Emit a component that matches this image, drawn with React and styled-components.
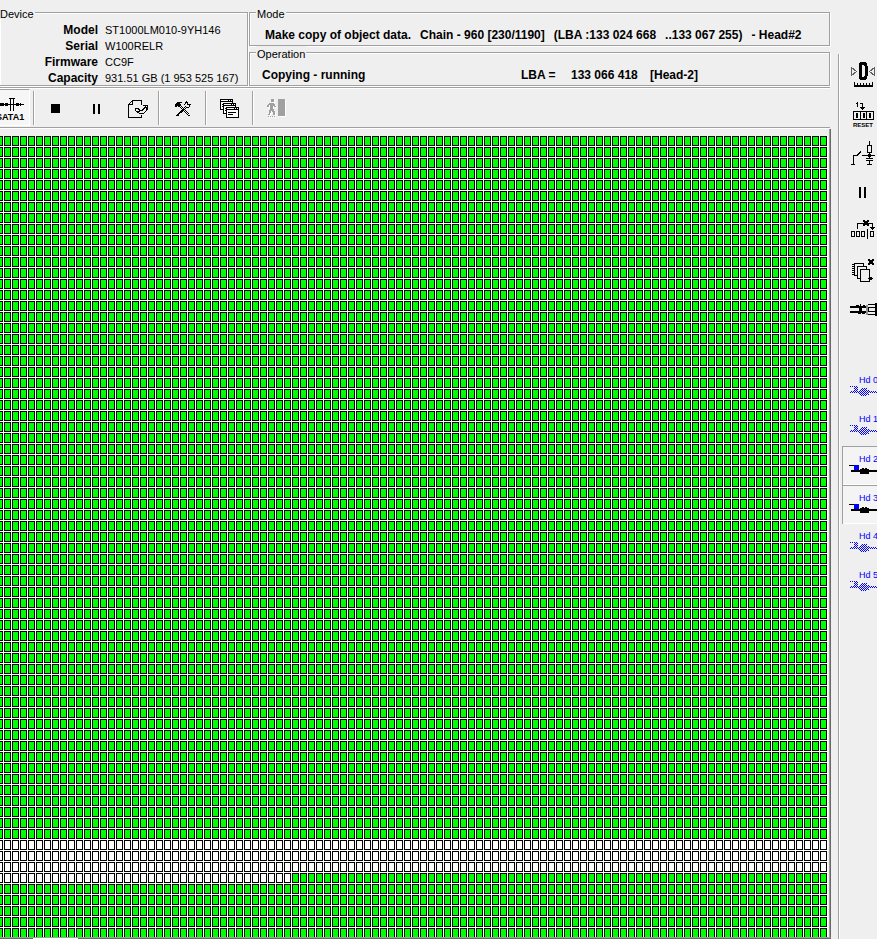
import React from "react";
import styled, { createGlobalStyle, css } from "styled-components";

const GlobalStyle = createGlobalStyle`
  * { box-sizing: border-box; }
  body {
    margin: 0;
    background: #efefef;
    color: #000;
    font-family: "Liberation Sans", Arial, sans-serif;
    font-size: 11px;
    overflow: hidden;
  }
`;

const Window = styled.div`
  display: flex;
  height: 100vh;
  overflow: hidden;
`;

const Main = styled.main`
  flex: 1;
  min-width: 0;
  display: flex;
  flex-direction: column;
  padding-right: 8px;
`;

const Header = styled.header`
  display: grid;
  grid-template-columns: 248px 1fr;
  column-gap: 1px;
  padding-top: 6px;
`;

const Stack = styled.div`
  display: flex;
  flex-direction: column;
  min-width: 0;
`;

const Group = styled.fieldset`
  margin: 0;
  min-width: 0;
  height: ${(p) => (p.$tall ? 80 : 40)}px;
  padding: 0;
  border: 1px solid #a0a0a0;
  box-shadow: 1px 1px 0 #fff, inset 1px 1px 0 #fff;
  ${(p) => p.$openLeft && css`border-left: 0;`}
`;

const Legend = styled.legend`
  height: 13px;
  line-height: 16px;
  margin-left: ${(p) => (p.$flush ? 0 : 6)}px;
  padding: ${(p) => (p.$flush ? "0 1px 0 0" : "0 1px")};
  background: #efefef;
`;

const Specs = styled.dl`
  display: grid;
  grid-template-columns: 98px 1fr;
  column-gap: 7px;
  margin: 3px 0 0;
  line-height: 16px;
`;

const SpecName = styled.dt`
  text-align: right;
  font-size: 12px;
  font-weight: bold;
`;

const SpecValue = styled.dd`
  margin: 0;
  white-space: nowrap;
`;

const Status = styled.p`
  display: flex;
  gap: ${(p) => (p.$phrases ? 9 : 0)}px;
  margin: 0;
  padding: 8px 0 0 ${(p) => (p.$phrases ? 15 : 12)}px;
  font-size: 12px;
  line-height: 16px;
  font-weight: bold;
  white-space: nowrap;
`;

const StatusCell = styled.span`
  flex: 0 0 ${(p) => p.$width}px;
`;

const Toolbar = styled.div`
  display: flex;
  height: 41px;
  margin-top: 1px;
  border-top: 1px solid #a0a0a0;
  border-bottom: 1px solid #a0a0a0;
  box-shadow: 0 1px 0 #fff, inset 0 1px 0 #fff;
`;

const ToolButton = styled.button`
  flex: 0 0 ${(p) => p.$width || 45}px;
  display: flex;
  align-items: center;
  justify-content: center;
  padding: 2px 0 0;
  border: 0;
  background: none;
`;

const PortButton = styled.button`
  flex: 0 0 30px;
  display: flex;
  flex-direction: column;
  align-items: flex-start;
  height: 37px;
  margin: 1px 3px 0 0;
  padding: 8px 0 0;
  overflow: hidden;
  border: 0;
  border-top: 1px solid #a0a0a0;
  border-right: 1px solid #fff;
  border-bottom: 1px solid #fff;
  background: #f6f6f6;
  color: #000;
  font: bold 9px/10px "Liberation Sans", Arial, sans-serif;
`;

const PortName = styled.span`
  margin-left: -4px;
`;

const Separator = styled.span`
  flex: 0 0 2px;
  margin: 3px 0 2px;
  border-left: 1px solid #a0a0a0;
  border-right: 1px solid #fff;
`;

const MapPanel = styled.section`
  flex: 1;
  min-height: 0;
  overflow: hidden;
  margin: 1px -1px 0 0;
  padding: 7px 2px 0 0;
  border-right: 1px solid #696969;
  border-bottom: 1px solid #a0a0a0;
  box-shadow: inset -1px 0 0 #a0a0a0;
`;

const MapRow = styled.div`
  display: flex;
  height: 11px;
`;

/* One tile is a 7x10 framed sector followed by a 1px white gap. */
const Sectors = styled.div`
  flex: ${(p) => (p.$count ? `0 0 ${p.$count * 8 - 4}px` : 1)};
  background-color: ${(p) => (p.$copied ? "#00ff00" : "#fff")};
  background-image:
    linear-gradient(#fff, #fff),
    linear-gradient(90deg, transparent 7px, #fff 7px),
    linear-gradient(#000, #000),
    linear-gradient(#000, #000),
    linear-gradient(90deg, #000 1px, transparent 1px 6px, #000 6px 7px, transparent 7px);
  background-size: 100% 1px, 8px 11px, 100% 1px, 100% 1px, 8px 11px;
  background-position: left bottom, right top, left top, left 9px, right top;
  background-repeat: repeat-x;
`;

const BottomEdge = styled.div`
  flex: 0 0 1px;
  margin-right: -1px;
  background: linear-gradient(90deg, #696969 33px, #fff 33px 78px, #696969 78px);
`;

const Side = styled.aside`
  flex: 0 0 39px;
  margin-top: 54px;
  padding: 2px 0 0 2px;
  overflow: hidden;
  border-left: 1px solid #a0a0a0;
  box-shadow: inset 1px 0 0 #fff;
`;

const SideGroup = styled.div`
  display: flex;
  flex-direction: column;
  width: 42px;
  padding-left: 1px;
  margin-bottom: 39px;
`;

const SideButton = styled.button`
  display: block;
  height: 39px;
  padding: 0;
  border: 0;
  background: none;
  text-align: left;
`;

const HeadButton = styled.button`
  display: flex;
  flex-direction: column;
  height: 39px;
  padding: ${(p) => (p.$active ? 7 : 6)}px 0 0;
  border: 0;
  background: ${(p) => (p.$active ? "#f4f4f4" : "none")};
  box-shadow: ${(p) => (p.$active ? "inset 1px 1px 0 #a0a0a0, inset 0 -1px 0 #fff" : "none")};
  color: #0000ff;
  font: 9px/12px "Liberation Sans", Arial, sans-serif;
  text-align: left;
`;

const HeadName = styled.span`
  padding-left: 17px;
  white-space: nowrap;
`;

const Drawing = styled.svg`
  display: block;
  flex: none;
  overflow: visible;
  shape-rendering: crispEdges;
`;

const line = { fill: "none", stroke: "#000", strokeWidth: 1 };

function Icon({ width, height, children }) {
  return (
    <Drawing width={width} height={height} viewBox={`0 0 ${width} ${height}`} aria-hidden="true">
      {children}
    </Drawing>
  );
}

const PortIcon = () => (
  <Icon width={26} height={14}>
    <path d="M0 6h24v1H0zM0 5h4v3H0zM5 5h3v3H5zM16 5h3v3h-3zM20 5h1v3h-1zM10 1h1v12h-1zM13 1h1v12h-1zM9 0h3v1H9zM12 0h3v1h-3z" />
  </Icon>
);

const StopIcon = () => (
  <Icon width={9} height={9}><path d="M0 0h9v9H0z" /></Icon>
);

const PauseIcon = () => (
  <Icon width={7} height={10}><path d="M0 0h2v10H0zM5 0h2v10H5z" /></Icon>
);

const PageIcon = () => (
  <Icon width={20} height={18}>
    <path {...line} d="M13.5 5V.5h-9l-4 4v13h13v-3M4.500 .5v4h-4" />
    <path {...line} d="M7 8.500h3l2 2h2l4-4M7.500 8.500v2l4 3h4l3-3v-4M15 5.500h4.500v4M9 11.500h3" />
  </Icon>
);

const ToolsIcon = () => (
  <Icon width={16} height={16}>
    <path {...line} d="M4 5l9 9M5 4l9 9M13 14.500h1v-1M11 5l-9 9M12 6l-9 8M1.500 13.500v1h2M9.500 4.500l1-3 2-1M12.500 .5v3h3M15.500 3.500l-2 3h-3" />
    <path d="M0 3h1V2h1V1h5v1H5v1h1v2H4v1H3V5H2v1H0z" />
  </Icon>
);

const WindowsIcon = () => (
  <Icon width={20} height={20}>
    {[[0, 0], [3, 4], [6, 8]].map(([x, y]) => (
      <g key={x} transform={`translate(${x} ${y})`}>
        <path fill="#fff" d="M0 0h13v11H0z" />
        <path {...line} d="M.5 .5h12v10H.5z" />
        <path d="M0 0h13v3H0zM2 5h8v1H2zM2 7h5v1H2z" />
        <path fill="#fff" d="M1 1h7v1H1zM9 1h1v1H9zM11 1h1v1h-1z" />
      </g>
    ))}
  </Icon>
);

const manAndDoor =
  "M4 0h3v3H4zM2 4h5v1h1v2h1v1H7V7H6v3h1v2h1v4H6v-3H5v-1H4v2H3v2H1v-1h1v-4h1V6H2v2H0V6h1V5h1zM11 0h7v17h-7zM1 17h1v1H1zM3 17h1v1H3zM5 17h1v1H5zM7 17h1v1H7z";

const ExitIcon = () => (
  <Icon width={20} height={20}>
    <path fill="#fff" transform="translate(1 1)" d={manAndDoor} />
    <path fill="#a0a0a0" d={manAndDoor} />
  </Icon>
);

const SideIcon = ({ children }) => <Icon width={35} height={39}>{children}</Icon>;

const ZeroIcon = () => (
  <SideIcon>
    <path fill="none" stroke="#606060" d="M9.500 11.500v8l5-4zM32.500 11.500v8l-5-4z" />
    <rect x="18" y="7" width="6" height="16" rx="3" fill="none" stroke="#000" strokeWidth="3" />
    <path d="M12 29h19v2H12zM12 26h1v3h-1zM15 27h1v2h-1zM18 27h1v2h-1zM21 27h1v2h-1zM24 27h1v2h-1zM27 27h1v2h-1zM30 26h1v3h-1z" />
  </SideIcon>
);

const ResetText = styled.text`
  font: bold 6px "Liberation Sans", Arial, sans-serif;
`;

const ResetIcon = () => (
  <SideIcon>
    <path d="M15 7h1v5h-1zM14 8h1v1h-1zM18 8h3v1h-3zM20 8h1v7h-1zM18 12h5v1h-5zM19 13h3v1h-3z" />
    <path {...line} d="M11 16.500h21M11 24.500h21M11.500 16.500v8M18.500 16.500v8M24.500 16.500v8M31.500 16.500v8" />
    <path {...line} d="M14.500 18.500h1v4h-1zM21.500 18.500h1v4h-1zM27.500 18.500h1v4h-1z" />
    <ResetText x="11" y="32">RESET</ResetText>
  </SideIcon>
);

const CircuitIcon = () => (
  <SideIcon>
    <path {...line} d="M27.500 7v4M25.500 11.500h4v7h-4zM27.500 18v6M20 21.500h13M24 24.500h7M24 26.500h7M27.500 27v4M25 30.500h5M9 30.500h4M11.500 30v-8.500h4M15 21.500l4-4" />
    <path d="M26 20h3v3h-3z" />
  </SideIcon>
);

const SidePauseIcon = () => (
  <SideIcon><path d="M17 14h2v11h-2zM22 14h2v11h-2z" /></SideIcon>
);

const SkipIcon = () => (
  <SideIcon>
    <path {...line} d="M15.500 17v-5.500h15V17M9.500 19.500h3v5h-3zM14.500 19.500h3v5h-3zM19.500 19.500h3v5h-3zM25.500 17v10M28.500 19.500h3v5h-3z" />
    <path d="M28 15h5v1h-5zM29 16h3v1h-3zM30 17h1v1h-1z" />
    <path d="M21 8h2v1h2V8h2v2h-1v2h1v2h-2v-1h-2v1h-2v-2h1v-2h-1z" />
  </SideIcon>
);

const PagesIcon = () => (
  <SideIcon>
    <path {...line} d="M10 13.500h2M10 15.500h2M10 17.500h2M10 19.500h2M10 21.500h2M10 23.500h2" />
    <path {...line} fill="#efefef" d="M12.500 12.500h9v12h-9z" />
    <path {...line} fill="#efefef" d="M15.500 15.500h9v12h-9z" />
    <path {...line} fill="#efefef" d="M18.500 18.500h9v12h-9z" />
    <path d="M26 27h5v1h-5zM28 26h2v3h-2zM26 8h2v1h2V8h2v2h-1v2h1v2h-2v-1h-2v1h-2v-2h1v-2h-1z" />
  </SideIcon>
);

const CableIcon = () => (
  <SideIcon>
    <path d="M8 16h16v2H8zM8 21h16v2H8zM14 15h3v1h-3zM18 14h1v2h-1zM21 15h2v1h-2zM17 18h3v3h-3zM16 23h3v1h-3zM20 23h3v1h-3zM33 13h2v13h-2z" />
    <path fill="#909090" d="M24 15h2v10h-2z" />
    <path {...line} d="M26 14.500h7M26 17.500h7M26 21.500h7M26 24.500h7M26.500 17v5" />
  </SideIcon>
);

const HeadIcon = ({ active }) => (
  <Icon width={35} height={12}>
    {active ? (
      <path d="M7 0h6v1H7zM9 5h27v2H9zM18 4h2V3h2v1h1V3h2v1h2v5h-9z" />
    ) : (
      <>
        <defs>
          <pattern id="dither" width="2" height="2" patternUnits="userSpaceOnUse">
            <path fill="#00f" d="M0 0h1v1H0zM1 1h1v1H1z" />
          </pattern>
        </defs>
        <path fill="url(#dither)" d="M7 0h9v5h-4V1H7zM8 5h28v2H8zM17 4h2V2h6v2h2v5h-2v1h-6V9h-2z" />
      </>
    )}
    {active && <path fill="#00f" d="M12 0h5v5h-5z" />}
  </Icon>
);

const specs = [
  ["Model", "ST1000LM010-9YH146"],
  ["Serial", "W100RELR"],
  ["Firmware", "CC9F"],
  ["Capacity", "931.51 GB (1 953 525 167)"],
];

const modePhrases = [
  "Make copy of object data.",
  "Chain - 960 [230/1190]",
  "(LBA :133 024 668",
  "..133 067 255)",
  "- Head#2",
];

const sideTools = [
  ["Recalibrate", ZeroIcon],
  ["Reset", ResetIcon],
  ["Power", CircuitIcon],
  ["Pause", SidePauseIcon],
  ["Skip", SkipIcon],
  ["Clear pages", PagesIcon],
  ["Cable", CableIcon],
];

const heads = [false, false, true, true, false, false];

/* Sectors still waiting at the start of each row; "all" covers a whole row. */
const pending = { 64: "all", 65: "all", 66: "all", 67: 37 };
const mapRows = Array.from({ length: 73 }, (_, i) => pending[i] || 0);

export default function App() {
  return (
    <>
      <GlobalStyle />
      <Window>
        <Main>
          <Header>
            <Group $tall $openLeft>
              <Legend $flush>Device</Legend>
              <Specs>
                {specs.map(([name, value]) => (
                  <React.Fragment key={name}>
                    <SpecName>{name}</SpecName>
                    <SpecValue>{value}</SpecValue>
                  </React.Fragment>
                ))}
              </Specs>
            </Group>
            <Stack>
              <Group>
                <Legend>Mode</Legend>
                <Status $phrases>
                  {modePhrases.map((phrase) => (
                    <span key={phrase}>{phrase} </span>
                  ))}
                </Status>
              </Group>
              <Group>
                <Legend>Operation</Legend>
                <Status>
                  <StatusCell $width={259}>Copying - running</StatusCell>
                  <StatusCell $width={50}>LBA =</StatusCell>
                  <StatusCell $width={79}>133 066 418</StatusCell>
                  <span>[Head-2]</span>
                </Status>
              </Group>
            </Stack>
          </Header>
          <Toolbar role="toolbar">
            <PortButton aria-pressed="true">
              <PortIcon />
              <PortName>SATA1</PortName>
            </PortButton>
            <Separator />
            <ToolButton $width={41} aria-label="Stop"><StopIcon /></ToolButton>
            <ToolButton $width={41} aria-label="Pause"><PauseIcon /></ToolButton>
            <ToolButton $width={41} aria-label="Open task"><PageIcon /></ToolButton>
            <Separator />
            <ToolButton aria-label="Settings"><ToolsIcon /></ToolButton>
            <Separator />
            <ToolButton aria-label="Windows"><WindowsIcon /></ToolButton>
            <Separator />
            <ToolButton aria-label="Exit" disabled><ExitIcon /></ToolButton>
          </Toolbar>
          <MapPanel aria-label="Sector map">
            {mapRows.map((count, i) => (
              <MapRow key={i}>
                {count > 0 && <Sectors $count={count} />}
                <Sectors $copied={count !== "all"} />
              </MapRow>
            ))}
          </MapPanel>
          <BottomEdge />
        </Main>
        <Side>
          <SideGroup>
            {sideTools.map(([name, Drawn]) => (
              <SideButton key={name} aria-label={name}><Drawn /></SideButton>
            ))}
          </SideGroup>
          <SideGroup>
            {heads.map((active, i) => (
              <HeadButton key={i} $active={active} aria-pressed={active}>
                <HeadName>Hd {i}</HeadName>
                <HeadIcon active={active} />
              </HeadButton>
            ))}
          </SideGroup>
        </Side>
      </Window>
    </>
  );
}
